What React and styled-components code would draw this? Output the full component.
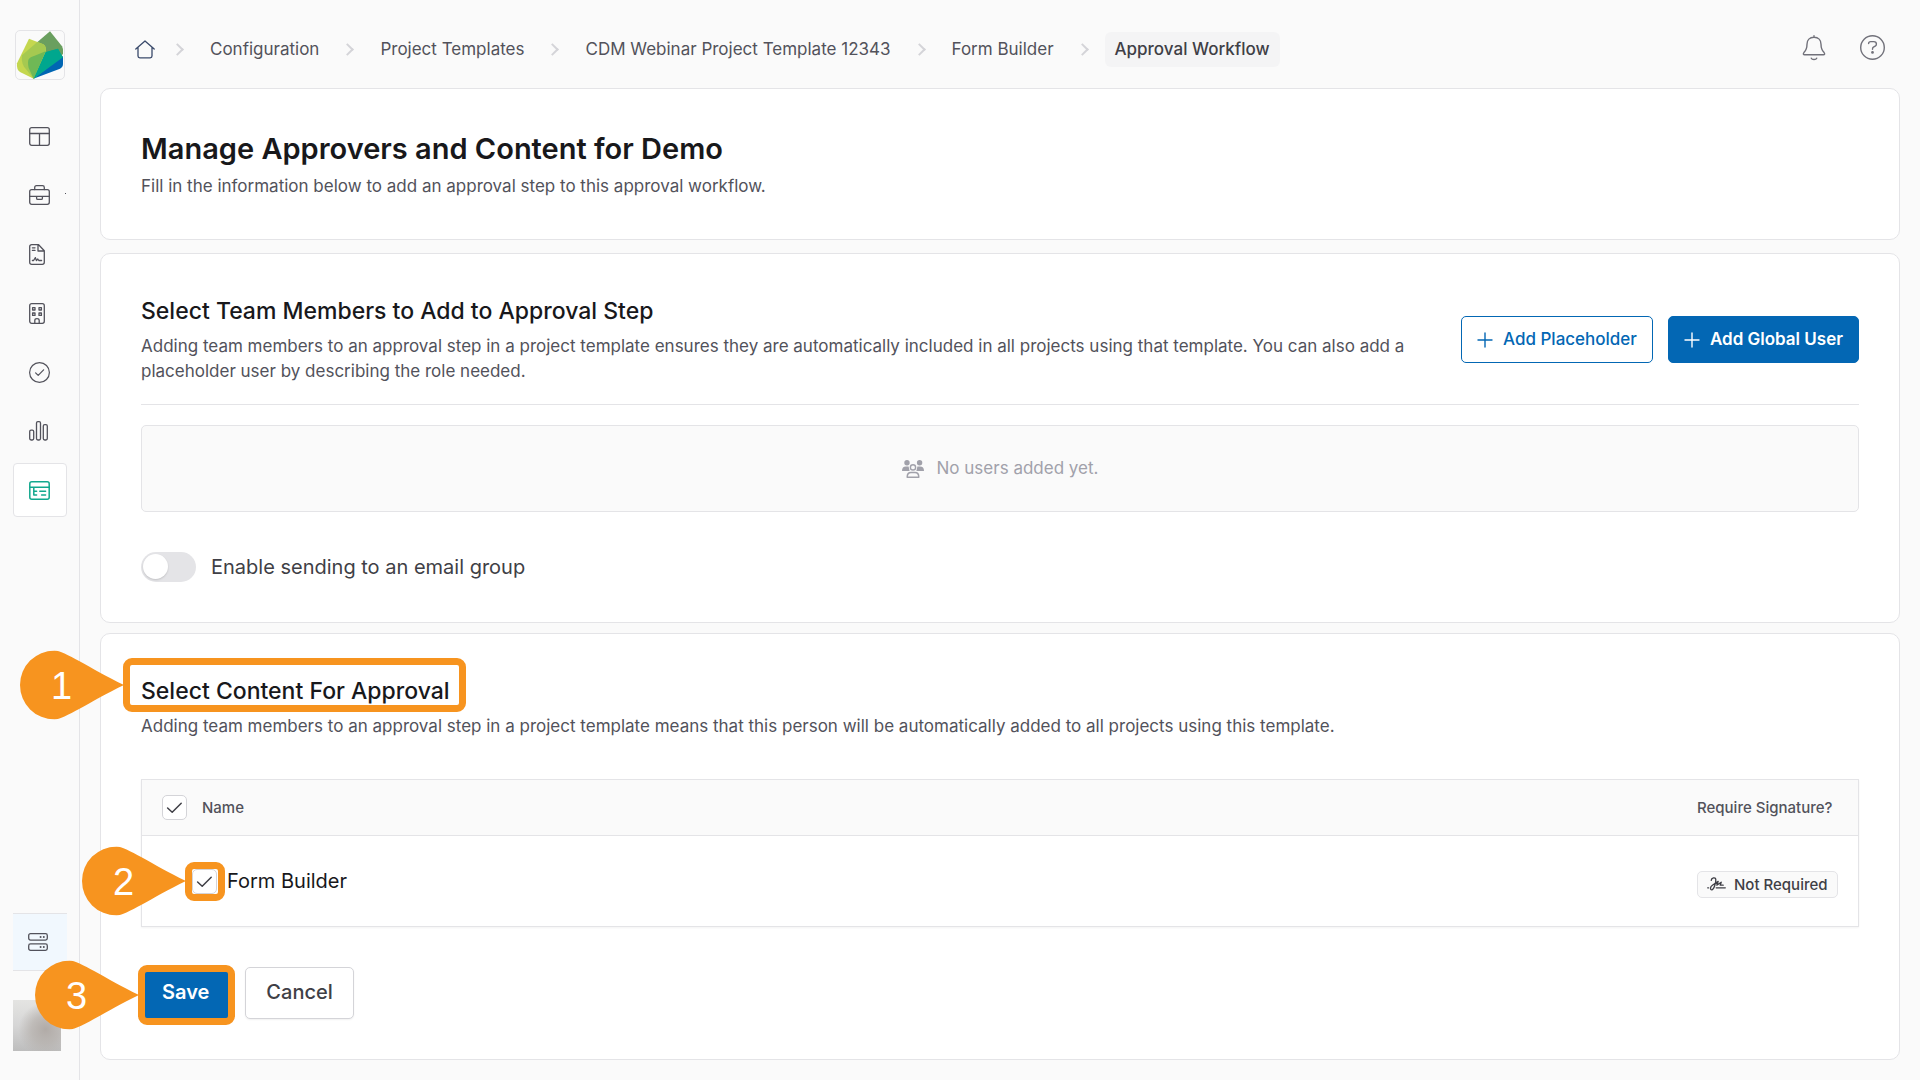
import React, { useState } from 'react';
import styled, { createGlobalStyle, css } from 'styled-components';

const c = {
  page: '#fafafa',
  white: '#ffffff',
  line: '#e4e4e7',
  lineDark: '#d4d4d8',
  ink: '#18181b',
  strong: '#3f3f46',
  body: '#52525b',
  icon: '#71717a',
  faint: '#a1a1aa',
  blue: '#0367b4',
  teal: '#12a88e',
  orange: '#f7941f',
};

const GlobalStyle = createGlobalStyle`
  *, *::before, *::after { box-sizing: border-box; }
  body {
    margin: 0;
    background: ${c.page};
    color: ${c.body};
    font-family: Inter, "Liberation Sans", sans-serif;
    font-size: 17px;
    line-height: 25px;
  }
  button, input { font: inherit; margin: 0; }
  h1, h2, p, ul, ol { margin: 0; padding: 0; }
  ul, ol { list-style: none; }
  svg { display: block; flex: none; }
`;

/* ---------- shell ---------- */

const Shell = styled.div`
  display: flex;
  min-height: 100vh;
`;

const Sidebar = styled.aside`
  flex: none;
  display: flex;
  flex-direction: column;
  width: 80px;
  padding: 30px 12px 29px 13px;
  border-right: 1px solid ${c.line};
`;

const LogoLink = styled.a`
  width: 50px;
  height: 50px;
  margin: 0 2px 29px;
  border: 1px solid ${c.line};
  border-radius: 5px;
`;

const NavList = styled.ul`
  display: flex;
  flex-direction: column;
  gap: 5px;
`;

const NavLink = styled.a`
  position: relative;
  display: flex;
  align-items: center;
  width: 54px;
  height: 54px;
  padding-left: 15px;
  border: 1px solid ${(p) => (p.$active ? c.line : 'transparent')};
  border-radius: 4px;
  background: ${(p) => (p.$active ? c.white : 'transparent')};
  color: ${(p) => (p.$active ? c.teal : c.body)};
`;

const FlyoutDot = styled.span`
  position: absolute;
  right: 0;
  top: 24px;
  width: 1px;
  height: 1px;
  background: ${c.body};
`;

const SidebarFoot = styled.div`
  display: flex;
  flex-direction: column;
  gap: 29px;
  margin-top: auto;
`;

const ServerLink = styled.a`
  display: flex;
  align-items: center;
  width: 54px;
  height: 58px;
  padding-left: 15px;
  border: solid ${c.line};
  border-width: 1px 0;
  background: #f1f8fe;
  color: ${c.body};
`;

const Avatar = styled.button`
  width: 48px;
  height: 51px;
  padding: 0;
  border: 0;
  background:
    radial-gradient(circle at 68% 58%, #b1aba7 0%, rgba(181, 176, 172, 0.7) 32%, rgba(190, 188, 187, 0) 62%),
    linear-gradient(180deg, #e4e4e2 0%, #d6d6d6 50%, #bdbdbd 100%);
`;

const Main = styled.main`
  flex: 1;
  min-width: 0;
  padding: 0 20px 20px;
`;

const TopBar = styled.header`
  display: flex;
  align-items: center;
  justify-content: space-between;
  height: 88px;
  padding: 10px 15px 0 31px;
`;

const Crumbs = styled.ol`
  display: flex;
  align-items: center;
`;

const Crumb = styled.li`
  display: flex;
  align-items: center;

  & + &::before {
    content: '';
    width: 9px;
    height: 9px;
    margin: 0 18px 0 14px;
    border: solid ${c.lineDark};
    border-width: 2px 2px 0 0;
    transform: rotate(45deg);
  }
`;

const CrumbLink = styled.a`
  display: block;
  padding: 5px ${(p) => (p.$icon ? 4 : 10)}px;
  border-radius: 6px;
  color: ${c.body};
  text-decoration: none;
  ${(p) =>
    p.$current &&
    css`
      background: #f4f4f5;
      color: ${c.strong};
      font-weight: 500;
    `}
`;

const TopActions = styled.div`
  display: flex;
  align-items: center;
  gap: 34px;
  padding-bottom: 3px;
`;

const IconButton = styled.button`
  display: flex;
  padding: 0;
  border: 0;
  background: none;
  color: ${c.icon};
`;

/* ---------- cards ---------- */

const Card = styled.section`
  margin-bottom: ${(p) => p.$gap || 0}px;
  padding: 41px 40px 40px;
  border: 1px solid ${c.line};
  border-radius: 10px;
  background: ${c.white};
`;

const PageTitle = styled.h1`
  margin-bottom: 6px;
  color: ${c.ink};
  font-size: 29px;
  font-weight: 600;
  line-height: 38px;
`;

const SectionTitle = styled.h2`
  margin-bottom: 6px;
  color: ${c.ink};
  font-size: 23px;
  font-weight: 500;
  line-height: 33px;
`;

const SectionHead = styled.div`
  display: flex;
  align-items: center;
  gap: 40px;
  padding-bottom: 20px;
  border-bottom: 1px solid ${c.line};
`;

const HeadText = styled.div`
  flex: 1;
  min-width: 0;
`;

const ButtonRow = styled.div`
  display: flex;
  gap: 15px;
`;

const Button = styled.button`
  display: flex;
  align-items: center;
  gap: 10px;
  padding: ${(p) => (p.$large ? '10px 20px 12px' : '10px 15px')};
  border: 1px solid ${(p) => (p.$kind === 'neutral' ? c.lineDark : c.blue)};
  border-radius: 5px;
  background: ${(p) => (p.$kind === 'primary' ? c.blue : c.white)};
  color: ${(p) => ({ primary: c.white, outline: c.blue, neutral: c.strong })[p.$kind]};
  font-size: ${(p) => (p.$large ? 20 : 17)}px;
  line-height: ${(p) => (p.$large ? 28 : 25)}px;
  font-weight: ${(p) => (p.$kind === 'primary' ? 600 : 500)};
  white-space: nowrap;
  box-shadow: ${(p) => (p.$kind === 'neutral' ? '0 1px 2px rgba(0, 0, 0, 0.06)' : 'none')};
`;

const EmptyState = styled.div`
  display: flex;
  align-items: center;
  justify-content: center;
  gap: 13px;
  margin: 20px 0 40px;
  padding: 30px;
  border: 1px solid ${c.line};
  border-radius: 5px;
  background: ${c.page};
  color: ${c.faint};
`;

const SwitchLabel = styled.label`
  display: flex;
  align-items: center;
  gap: 15px;
  color: ${c.strong};
  font-size: 20px;
  line-height: 30px;
`;

const Switch = styled.input`
  appearance: none;
  width: 55px;
  height: 30px;
  padding: 2px;
  border-radius: 15px;
  background: ${(p) => (p.checked ? c.blue : c.line)};

  &::before {
    content: '';
    display: block;
    width: 25px;
    height: 25px;
    border-radius: 50%;
    background: ${c.white};
    box-shadow: 0 1px 2px rgba(0, 0, 0, 0.15);
    transform: translateX(${(p) => (p.checked ? 26 : 0)}px);
  }
`;

/* ---------- table ---------- */

const Table = styled.table`
  width: 100%;
  margin: 40px 0;
  border: 1px solid ${c.line};
  border-spacing: 0;
  box-shadow: 0 1px 2px rgba(0, 0, 0, 0.05);
`;

const HeadCell = styled.th`
  height: 56px;
  padding: 0 20px;
  border-bottom: 1px solid ${c.line};
  background: ${c.page};
  font-size: 15px;
  font-weight: 500;
  text-align: left;
`;

const NameCell = styled.td`
  height: 90px;
  padding: 0 50px;
`;

const SignatureCell = styled.td`
  width: 181px;
  padding: 6px 20px 0;
`;

const CheckLabel = styled.label`
  display: flex;
  align-items: center;
  gap: ${(p) => (p.$row ? 10 : 15)}px;
  ${(p) =>
    p.$row &&
    css`
      color: ${c.ink};
      font-size: 20px;
    `}
`;

const CheckWrap = styled.span`
  position: relative;
  display: block;
  width: 25px;
  height: 25px;

  & > svg {
    position: absolute;
    inset: 0;
    pointer-events: none;
  }
`;

const CheckInput = styled.input`
  appearance: none;
  display: block;
  width: 25px;
  height: 25px;
  border: 1px solid ${c.lineDark};
  border-radius: 5px;
  background: ${c.white};
`;

const SignatureButton = styled.button`
  display: flex;
  align-items: center;
  gap: 8px;
  padding: 0 9px;
  border: 1px solid ${c.line};
  border-radius: 5px;
  background: ${c.page};
  color: ${c.strong};
  font-size: 15px;
  font-weight: 500;
  line-height: 25px;
  white-space: nowrap;
`;

/* ---------- numbered callouts ---------- */

const Target = styled.span`
  position: relative;
  display: inline-block;
`;

const Frame = styled.span`
  position: absolute;
  inset: ${(p) => p.$inset};
  border: 7px solid ${c.orange};
  border-radius: 9px;
  pointer-events: none;
`;

const Drop = styled.span`
  position: absolute;
  right: 100%;
  top: 50%;
  display: flex;
  align-items: center;
  justify-content: center;
  width: 104px;
  height: 69px;
  margin-right: 6px;
  padding-right: 21px;
  transform: translateY(-50%);
  color: ${c.white};
  font: 400 38px/44px "Liberation Sans", Arial, sans-serif;

  & > svg { position: absolute; inset: 0; }
  & > b { position: relative; font-weight: 400; }
`;

const Callout = ({ n, inset }) => (
  <Frame $inset={inset}>
    <Drop>
      <svg width="104" height="69" viewBox="0 0 104 69" fill={c.orange}>
        <path d="M34.5 0C44 0 70 18 104 34.5C70 51 44 69 34.5 69A34.5 34.5 0 0 1 34.5 0Z" />
      </svg>
      <b>{n}</b>
    </Drop>
  </Frame>
);

/* ---------- icons ---------- */

const Icon = ({ w, h, sw = 1.3, children }) => (
  <svg
    width={w}
    height={h}
    viewBox={`0 0 ${w} ${h}`}
    fill="none"
    stroke="currentColor"
    strokeWidth={sw}
    strokeLinecap="round"
    strokeLinejoin="round"
    aria-hidden="true"
  >
    {children}
  </svg>
);

const Logo = () => (
  <svg width="48" height="48" viewBox="48 93 144 144" aria-hidden="true">
    <path fill="#6a9f5f" d="M150 94L186 139Q191 147 189 160L180 180L100 236L108 130Z" />
    <path fill="#0066b3" d="M189 168V192Q189 202 180 206L100 236Z" />
    <path fill="#00a78e" d="M174 146L189 172L101 236L84 190L130 158Z" />
    <path fill="#c4d74f" d="M87 116L130 133Q138 137 138 152L101 236L60 216Q49 209 51 190Z" />
    <path fill="#a5c951" d="M112 126L130 133Q139 138 137 155L101 236L72 200Q63 186 66 166Z" />
    <path fill="#6fb856" d="M137 154L101 236L86 204Q82 186 86 178Q90 171 104 167Z" />
    <path fill="#00a78e" d="M137 157L174 146L180 160L101 236Z" />
  </svg>
);

const icons = {
  dashboard: (
    <Icon w={21} h={19}>
      <rect x="0.7" y="0.7" width="19.6" height="17.6" rx="2" />
      <path d="M0.7 6.5H20.3M10.5 6.5V18.3" />
    </Icon>
  ),
  briefcase: (
    <Icon w={21} h={20}>
      <rect x="0.7" y="4.6" width="19.6" height="14.7" rx="2" />
      <path d="M5.7 4.6V2.5Q5.7 0.7 7.5 0.7H13.5Q15.3 0.7 15.3 2.5V4.6M0.7 11.3H20.3M7.6 11.3V13.2Q7.6 14.4 8.8 14.4H12.2Q13.4 14.4 13.4 13.2V11.3" />
    </Icon>
  ),
  contract: (
    <Icon w={16} h={21}>
      <path d="M2.7 0.7H9.6L15.3 6.8V18.3Q15.3 20.3 13.3 20.3H2.7Q0.7 20.3 0.7 18.3V2.7Q0.7 0.7 2.7 0.7ZM9 0.9V7H15.2" />
      <path d="M3.4 3.8H6M3.4 6.4H6M3.4 16.5H4.6L6.4 13.6L7.4 16.6L8.8 15L9.8 16.5H12.6" />
    </Icon>
  ),
  building: (
    <Icon w={16} h={21}>
      <rect x="0.7" y="0.7" width="14.6" height="19.6" rx="2" />
      <path d="M3.6 4.6H6V7H3.6ZM10 4.6H12.4V7H10ZM3.6 10H6V12.4H3.6ZM10 10H12.4V12.4H10ZM5.8 20.3V17.4Q5.8 15.6 8 15.6Q10.2 15.6 10.2 17.4V20.3" />
    </Icon>
  ),
  approvals: (
    <Icon w={21} h={21} sw={1.2}>
      <circle cx="10.5" cy="10.5" r="9.9" />
      <path d="M6.6 10.8L9.2 13.4L14.6 7.8" />
    </Icon>
  ),
  reports: (
    <Icon w={21} h={20}>
      <rect x="0.7" y="9.2" width="4" height="9.8" rx="1.4" />
      <rect x="7.5" y="0.7" width="4" height="18.3" rx="1.4" />
      <rect x="14.3" y="3.6" width="4" height="15.4" rx="1.4" />
    </Icon>
  ),
  templates: (
    <Icon w={21} h={19} sw={1.5}>
      <rect x="0.8" y="0.8" width="19.4" height="17.4" rx="2" />
      <path d="M0.8 6.3H20.2M4.8 6.5V13.9H7.6M4.8 10.2H7.6M10.8 10.2H16.6M12.6 13.9H16.6" />
    </Icon>
  ),
};

const HomeIcon = () => (
  <svg width="20" height="19" viewBox="0 0 20 19" fill="none" stroke="#3a4a6b" strokeWidth="1.3" strokeLinecap="round" strokeLinejoin="round">
    <path d="M0.8 9L10 0.9L19.2 9M3 7.2V16Q3 17.8 4.8 17.8H15.2Q17 17.8 17 16V7.2" />
  </svg>
);

const BellIcon = () => (
  <Icon w={24} h={26} sw={1.4}>
    <path d="M12 0.8V2.2M12 2.2C7.6 2.2 5 5.2 5 9.2C5 13.6 4 15.4 1.9 17.6C0.9 18.8 1.4 19.8 2.6 19.8H21.4C22.6 19.8 23.1 18.8 22.1 17.6C20 15.4 19 13.6 19 9.2C19 5.2 16.4 2.2 12 2.2ZM9.3 23.2C10 24.9 14 24.9 14.7 23.2" />
  </Icon>
);

const HelpIcon = () => (
  <Icon w={25} h={25} sw={1.4}>
    <circle cx="12.5" cy="12.5" r="11.8" />
    <path d="M8.6 8.6Q8.6 6.6 10.8 6.6H13.8Q16.4 6.6 16.4 9Q16.4 10.5 15.2 11.2L13.4 12.2Q12.5 12.8 12.5 14.2" />
    <circle cx="12.5" cy="17.4" r="0.7" fill="currentColor" />
  </Icon>
);

const PlusIcon = () => (
  <Icon w={16} h={16} sw={1.4}>
    <path d="M8 1V15M1 8H15" />
  </Icon>
);

const PeopleIcon = () => (
  <svg width="22" height="18" viewBox="0 0 22 18" fill="currentColor" aria-hidden="true">
    <circle cx="5" cy="2.8" r="2.7" />
    <circle cx="17.6" cy="2.8" r="2.7" />
    <path d="M0 11Q0 6.6 4 6.6H6.6L7.6 11ZM22 11Q22 6.6 18 6.6H15.4L14.4 11Z" />
    <circle cx="11" cy="7.4" r="2.6" fill="none" stroke="currentColor" strokeWidth="1.4" />
    <path d="M5.2 17.2Q5.2 12.6 9 12.6H13Q16.8 12.6 16.8 17.2Z" fill="none" stroke="currentColor" strokeWidth="1.5" strokeLinejoin="round" />
  </svg>
);

const ServerIcon = () => (
  <Icon w={20} h={18}>
    <rect x="0.7" y="0.7" width="18.6" height="6.4" rx="1.8" />
    <rect x="0.7" y="10.9" width="18.6" height="6.4" rx="1.8" />
    <path d="M12.6 3.9V4M15.8 3.9V4M12.6 14V14.1M15.8 14V14.1" strokeWidth="2" />
  </Icon>
);

const SignatureIcon = () => (
  <Icon w={19} h={14} sw={1.3}>
    <path d="M0.7 10.8H1.6M4.2 3.4C4.4 0.8 8.6 -0.2 8.8 2.6C9 5.4 7 12.8 4.8 12.8C3 12.8 3 9.8 5.4 8.2L11.2 4.4L9.8 8.2L14.2 5.2L13.2 8.2H16.2M9.2 10.8H18.3" />
  </Icon>
);

/* ---------- pieces ---------- */

function Checkbox({ id }) {
  const [on, setOn] = useState(true);
  return (
    <CheckWrap>
      <CheckInput type="checkbox" id={id} checked={on} onChange={() => setOn(!on)} />
      {on && (
        <svg width="25" height="25" viewBox="0 0 25 25" fill="none" stroke={c.strong} strokeWidth="1.5" strokeLinecap="round" strokeLinejoin="round">
          <path d="M5.6 13L10.2 17.3L19.2 8.3" />
        </svg>
      )}
    </CheckWrap>
  );
}

const navItems = [
  ['dashboard', 'Dashboard'],
  ['briefcase', 'Projects'],
  ['contract', 'Contracts'],
  ['building', 'Companies'],
  ['approvals', 'Approvals'],
  ['reports', 'Reports'],
  ['templates', 'Configuration'],
];

const crumbs = ['Configuration', 'Project Templates', 'CDM Webinar Project Template 12343', 'Form Builder', 'Approval Workflow'];

export default function App() {
  const [group, setGroup] = useState(false);

  return (
    <>
      <GlobalStyle />
      <Shell>
        <Sidebar>
          <LogoLink href="#" aria-label="Home">
            <Logo />
          </LogoLink>
          <nav>
            <NavList>
              {navItems.map(([key, label]) => (
                <li key={key}>
                  <NavLink href="#" aria-label={label} $active={key === 'templates'}>
                    {icons[key]}
                    {key === 'briefcase' && <FlyoutDot />}
                  </NavLink>
                </li>
              ))}
            </NavList>
          </nav>
          <SidebarFoot>
            <ServerLink href="#" aria-label="Servers">
              <ServerIcon />
            </ServerLink>
            <Avatar type="button" aria-label="Account" />
          </SidebarFoot>
        </Sidebar>

        <Main>
          <TopBar>
            <nav aria-label="Breadcrumb">
              <Crumbs>
                <Crumb>
                  <CrumbLink href="#" aria-label="Home" $icon>
                    <HomeIcon />
                  </CrumbLink>
                </Crumb>
                {crumbs.map((name, i) => (
                  <Crumb key={name}>
                    <CrumbLink href="#" $current={i === crumbs.length - 1}>
                      {name}
                    </CrumbLink>
                  </Crumb>
                ))}
              </Crumbs>
            </nav>
            <TopActions>
              <IconButton type="button" aria-label="Notifications">
                <BellIcon />
              </IconButton>
              <IconButton type="button" aria-label="Help">
                <HelpIcon />
              </IconButton>
            </TopActions>
          </TopBar>

          <Card $gap={13}>
            <PageTitle>Manage Approvers and Content for Demo</PageTitle>
            <p>Fill in the information below to add an approval step to this approval workflow.</p>
          </Card>

          <Card $gap={10}>
            <SectionHead>
              <HeadText>
                <SectionTitle>Select Team Members to Add to Approval Step</SectionTitle>
                <p>
                  Adding team members to an approval step in a project template ensures they are automatically included in
                  all projects using that template. You can also add a placeholder user by describing the role needed.
                </p>
              </HeadText>
              <ButtonRow>
                <Button type="button" $kind="outline">
                  <PlusIcon />
                  Add Placeholder
                </Button>
                <Button type="button" $kind="primary">
                  <PlusIcon />
                  Add Global User
                </Button>
              </ButtonRow>
            </SectionHead>
            <EmptyState>
              <PeopleIcon />
              No users added yet.
            </EmptyState>
            <SwitchLabel htmlFor="email-group">
              <Switch id="email-group" type="checkbox" role="switch" checked={group} onChange={() => setGroup(!group)} />
              Enable sending to an email group
            </SwitchLabel>
          </Card>

          <Card>
            <SectionTitle>
              <Target>
                Select Content For Approval
                <Callout n={1} inset="-17px -16px -4px -18px" />
              </Target>
            </SectionTitle>
            <p>
              Adding team members to an approval step in a project template means that this person will be automatically
              added to all projects using this template.
            </p>

            <Table>
              <thead>
                <tr>
                  <HeadCell scope="col">
                    <CheckLabel htmlFor="all">
                      <Checkbox id="all" />
                      Name
                    </CheckLabel>
                  </HeadCell>
                  <HeadCell scope="col">Require Signature?</HeadCell>
                </tr>
              </thead>
              <tbody>
                <tr>
                  <NameCell>
                    <CheckLabel htmlFor="form-builder" $row>
                      <Target>
                        <Checkbox id="form-builder" />
                        <Callout n={2} inset="-7px -8px -7px -7px" />
                      </Target>
                      Form Builder
                    </CheckLabel>
                  </NameCell>
                  <SignatureCell>
                    <SignatureButton type="button">
                      <SignatureIcon />
                      Not Required
                    </SignatureButton>
                  </SignatureCell>
                </tr>
              </tbody>
            </Table>

            <ButtonRow>
              <Target>
                <Button type="submit" $kind="primary" $large>
                  Save
                </Button>
                <Callout n={3} inset="-2px -5px -6px -3px" />
              </Target>
              <Button type="button" $kind="neutral" $large>
                Cancel
              </Button>
            </ButtonRow>
          </Card>
        </Main>
      </Shell>
    </>
  );
}
